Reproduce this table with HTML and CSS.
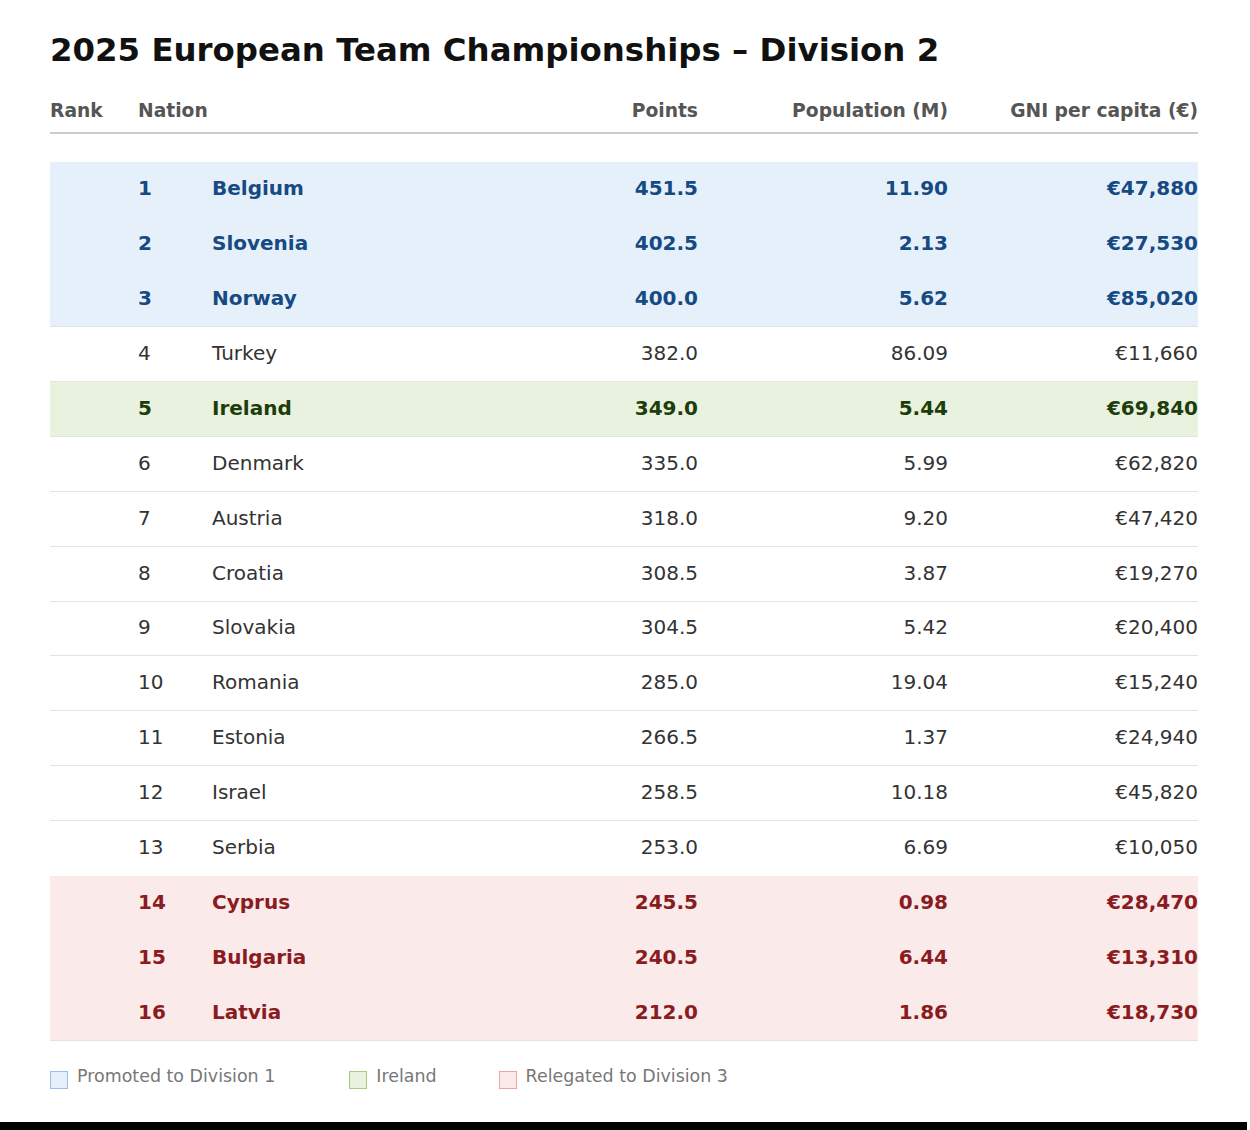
FILE: index.html
```html
<!DOCTYPE html>
<html lang="en">
<head>
<meta charset="utf-8">
<title>2025 European Team Championships – Division 2</title>
<link rel="stylesheet" href="styles.css">
</head>
<body>
<div class="page">
  <h1 class="title">2025 European Team Championships – Division 2</h1>
  <div class="table">
    <div class="head">
      <div class="th">Rank</div>
      <div class="th">Nation</div>
      <div class="th num">Points</div>
      <div class="th num">Population (M)</div>
      <div class="th num">GNI per capita (€)</div>
    </div>
    <div class="body">
      <div class="row promo"><div></div><div>1</div><div>Belgium</div><div class="num">451.5</div><div class="num">11.90</div><div class="num">€47,880</div></div>
      <div class="row promo"><div></div><div>2</div><div>Slovenia</div><div class="num">402.5</div><div class="num">2.13</div><div class="num">€27,530</div></div>
      <div class="row promo last"><div></div><div>3</div><div>Norway</div><div class="num">400.0</div><div class="num">5.62</div><div class="num">€85,020</div></div>
      <div class="row"><div></div><div>4</div><div>Turkey</div><div class="num">382.0</div><div class="num">86.09</div><div class="num">€11,660</div></div>
      <div class="row ire last"><div></div><div>5</div><div>Ireland</div><div class="num">349.0</div><div class="num">5.44</div><div class="num">€69,840</div></div>
      <div class="row"><div></div><div>6</div><div>Denmark</div><div class="num">335.0</div><div class="num">5.99</div><div class="num">€62,820</div></div>
      <div class="row"><div></div><div>7</div><div>Austria</div><div class="num">318.0</div><div class="num">9.20</div><div class="num">€47,420</div></div>
      <div class="row"><div></div><div>8</div><div>Croatia</div><div class="num">308.5</div><div class="num">3.87</div><div class="num">€19,270</div></div>
      <div class="row"><div></div><div>9</div><div>Slovakia</div><div class="num">304.5</div><div class="num">5.42</div><div class="num">€20,400</div></div>
      <div class="row"><div></div><div>10</div><div>Romania</div><div class="num">285.0</div><div class="num">19.04</div><div class="num">€15,240</div></div>
      <div class="row"><div></div><div>11</div><div>Estonia</div><div class="num">266.5</div><div class="num">1.37</div><div class="num">€24,940</div></div>
      <div class="row"><div></div><div>12</div><div>Israel</div><div class="num">258.5</div><div class="num">10.18</div><div class="num">€45,820</div></div>
      <div class="row plain-last"><div></div><div>13</div><div>Serbia</div><div class="num">253.0</div><div class="num">6.69</div><div class="num">€10,050</div></div>
      <div class="row rel"><div></div><div>14</div><div>Cyprus</div><div class="num">245.5</div><div class="num">0.98</div><div class="num">€28,470</div></div>
      <div class="row rel"><div></div><div>15</div><div>Bulgaria</div><div class="num">240.5</div><div class="num">6.44</div><div class="num">€13,310</div></div>
      <div class="row rel last"><div></div><div>16</div><div>Latvia</div><div class="num">212.0</div><div class="num">1.86</div><div class="num">€18,730</div></div>
    </div>
  </div>
  <div class="legend">
    <div class="item item-promo"><span class="sw sw-promo"></span><span>Promoted to Division 1</span></div>
    <div class="item item-ire"><span class="sw sw-ire"></span><span>Ireland</span></div>
    <div class="item"><span class="sw sw-rel"></span><span>Relegated to Division 3</span></div>
  </div>
</div>
<div class="edge"></div>
</body>
</html>
```
FILE: styles.css
```css
html, body {
  margin: 0;
  padding: 0;
  background: #fff;
}
body {
  font-family: "DejaVu Sans", sans-serif;
  color: #333;
}
.page {
  box-sizing: border-box;
  width: 1247px;
  height: 1122px;
  padding: 32px 52px 0 50px;
  background: #fff;
}
.title {
  margin: 0;
  font-size: 32.4px;
  line-height: 37px;
  font-weight: bold;
  color: #111;
}
.table {
  margin-top: 31px;
  width: 1148px;
}
.head {
  display: grid;
  grid-template-columns: 88px 1fr 250px 250px 250px;
  font-size: 18.7px;
  line-height: 21px;
  font-weight: bold;
  color: #555;
  padding-bottom: 11px;
  border-bottom: 2px solid #cbcbcb;
}
.num {
  text-align: right;
}
.body {
  padding-top: 28px;
}
.row {
  display: grid;
  grid-template-columns: 88px 74px 1fr 250px 250px 250px;
  height: 54.94px;
  box-sizing: border-box;
  padding-bottom: 2px;
  align-items: center;
  font-size: 20px;
  line-height: 24px;
  border-bottom: 1px solid #e4e4e4;
}
.row.plain-last {
  border-bottom-color: transparent;
}
.promo {
  background: #e6f0fa;
  color: #164a82;
  font-weight: bold;
  border-bottom-color: #e6f0fa;
}
.ire {
  background: #e9f2de;
  color: #1d3d0c;
  font-weight: bold;
}
.rel {
  background: #fbeaea;
  color: #8a1c1f;
  font-weight: bold;
  border-bottom-color: #fbeaea;
}
.row.last {
  border-bottom-color: #e4e4e4;
}
.legend {
  display: flex;
  margin-top: 25px;
  font-size: 17.45px;
  line-height: 20px;
  color: #777;
}
.item {
  display: flex;
  align-items: flex-start;
}
.item-promo {
  margin-right: 74px;
}
.item-ire {
  margin-right: 62px;
}
.sw {
  display: block;
  box-sizing: border-box;
  width: 18px;
  height: 18px;
  margin-top: 5px;
  margin-right: 9px;
  border: 1.5px solid;
}
.sw-promo {
  background: #e6f0fa;
  border-color: #92c2f0;
}
.sw-ire {
  background: #e9f2de;
  border-color: #a6cc7a;
}
.sw-rel {
  background: #fbeaea;
  border-color: #f0a4a4;
}
.edge {
  width: 1247px;
  height: 8px;
  background: #000;
}
```
